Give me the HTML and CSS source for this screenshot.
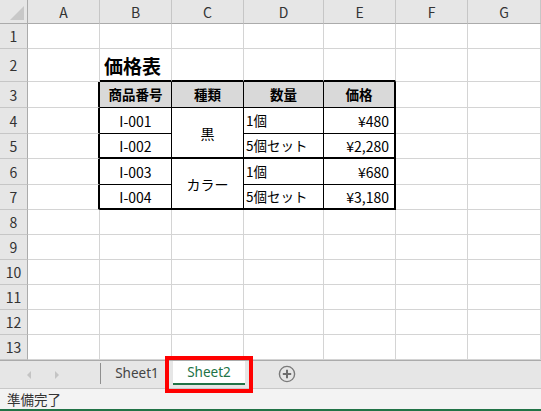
FILE: index.html
```html
<!DOCTYPE html>
<html lang="ja">
<head>
<meta charset="utf-8">
<title>価格表</title>
<link rel="stylesheet" href="styles.css">
</head>
<body>
<div class="app">
  <div class="sheet">
    <div class="corner"><span class="tri"></span></div>
    <div class="ch">A</div><div class="ch">B</div><div class="ch">C</div><div class="ch">D</div><div class="ch">E</div><div class="ch">F</div><div class="ch">G</div>

    <div class="rh">1</div>
    <div class="c"></div><div class="c"></div><div class="c"></div><div class="c"></div><div class="c"></div><div class="c"></div><div class="c"></div>

    <div class="rh">2</div>
    <div class="c"></div><div class="c title tb">価格表</div><div class="c tb"></div><div class="c tb"></div><div class="c tb"></div><div class="c"></div><div class="c"></div>

    <div class="rh">3</div>
    <div class="c tl"></div><div class="t th">商品番号</div><div class="t th">種類</div><div class="t th">数量</div><div class="t th tr">価格</div><div class="c"></div><div class="c"></div>

    <div class="rh">4</div>
    <div class="c tl"></div><div class="t ctr">I-001</div><div class="t ctr merge thickb">黒</div><div class="t lft">1個</div><div class="t rgt tr">¥480</div><div class="c"></div><div class="c"></div>

    <div class="rh">5</div>
    <div class="c tl"></div><div class="t ctr thickb">I-002</div><div class="t lft thickb">5個セット</div><div class="t rgt tr thickb">¥2,280</div><div class="c"></div><div class="c"></div>

    <div class="rh">6</div>
    <div class="c tl"></div><div class="t ctr">I-003</div><div class="t ctr merge thickb">カラー</div><div class="t lft">1個</div><div class="t rgt tr">¥680</div><div class="c"></div><div class="c"></div>

    <div class="rh">7</div>
    <div class="c tl"></div><div class="t ctr thickb">I-004</div><div class="t lft thickb">5個セット</div><div class="t rgt tr thickb">¥3,180</div><div class="c"></div><div class="c"></div>

    <div class="rh">8</div>
    <div class="c"></div><div class="c"></div><div class="c"></div><div class="c"></div><div class="c"></div><div class="c"></div><div class="c"></div>
    <div class="rh">9</div>
    <div class="c"></div><div class="c"></div><div class="c"></div><div class="c"></div><div class="c"></div><div class="c"></div><div class="c"></div>
    <div class="rh">10</div>
    <div class="c"></div><div class="c"></div><div class="c"></div><div class="c"></div><div class="c"></div><div class="c"></div><div class="c"></div>
    <div class="rh">11</div>
    <div class="c"></div><div class="c"></div><div class="c"></div><div class="c"></div><div class="c"></div><div class="c"></div><div class="c"></div>
    <div class="rh">12</div>
    <div class="c"></div><div class="c"></div><div class="c"></div><div class="c"></div><div class="c"></div><div class="c"></div><div class="c"></div>
    <div class="rh">13</div>
    <div class="c"></div><div class="c"></div><div class="c"></div><div class="c"></div><div class="c"></div><div class="c"></div><div class="c"></div>
  </div>

  <div class="tabbar">
    <div class="nav">
      <svg class="arrow" width="8" height="10" viewBox="0 0 8 10"><path d="M6 1 L2 5 L6 9 Z" fill="#c4c4c4"/></svg>
      <svg class="arrow" width="8" height="10" viewBox="0 0 8 10"><path d="M2 1 L6 5 L2 9 Z" fill="#c4c4c4"/></svg>
    </div>
    <div class="sep"></div>
    <div class="tab">Sheet1</div>
    <div class="tab active">Sheet2<span class="highlight"></span></div>
    <svg class="add" width="18" height="18" viewBox="0 0 18 18">
      <circle cx="9" cy="9" r="7.6" fill="none" stroke="#7a7a7a" stroke-width="1.4"/>
      <path d="M9 4.8 V13.2 M4.8 9 H13.2" stroke="#6e6e6e" stroke-width="2"/>
    </svg>
  </div>

  <div class="status">準備完了</div>
</div>
</body>
</html>
```

FILE: styles.css
```css
* { box-sizing: border-box; }
html, body { margin: 0; padding: 0; }
body {
  width: 541px;
  height: 411px;
  overflow: hidden;
  background: #fff;
  font-family: "Noto Sans CJK JP", "Noto Sans", sans-serif;
  color: #000;
}
.app { display: flex; flex-direction: column; width: 541px; height: 411px; }

.sheet {
  display: grid;
  grid-template-columns: 28px 72px 72px 72px 80px 72px 72px 73px;
  grid-template-rows: 24px 25px 33px 26px 26px 25px 26px 25px 25px 25px 25px 25px 25px 25px;
  height: 360px;
}

.corner {
  background: #e6e6e6;
  border-right: 1px solid #ababab;
  border-bottom: 1px solid #ababab;
  position: relative;
}
.tri {
  position: absolute;
  right: 3px;
  bottom: 3px;
  width: 0; height: 0;
  border-left: 14px solid transparent;
  border-bottom: 14px solid #c8c8c8;
}
.ch {
  background: #e6e6e6;
  border-right: 1px solid #c6c6c6;
  border-bottom: 1px solid #ababab;
  display: flex; align-items: center; justify-content: center;
  font-size: 14px;
  color: #333;
  padding-top: 1px;
}
.rh {
  background: #e6e6e6;
  border-right: 1px solid #ababab;
  border-bottom: 1px solid #c6c6c6;
  display: flex; align-items: center; justify-content: center;
  font-size: 14px;
  color: #333;
}
.c {
  border-right: 1px solid #d4d4d4;
  border-bottom: 1px solid #d4d4d4;
}
.title {
  font-size: 19px;
  font-weight: bold;
  display: flex; align-items: flex-end;
  padding: 0 0 5px 4px;
  line-height: 1;
  white-space: nowrap;
}
.tb { border-bottom: 2px solid #000; }
.tl { border-right: 2px solid #000; }

.t {
  border-right: 1px solid #000;
  border-bottom: 1px solid #000;
  display: flex; align-items: center;
  font-size: 14px;
  line-height: 1;
  white-space: nowrap;
}
.th {
  background: #d9d9d9;
  justify-content: center;
  font-weight: bold;
  font-size: 13.5px;
}
.tr { border-right: 2px solid #000; }
.thickb { border-bottom: 2px solid #000; }
.ctr { justify-content: center; }
.lft { justify-content: flex-start; padding-left: 2px; font-size: 13.5px; }
.rgt { justify-content: flex-end; padding-right: 5px; }
.merge { grid-row: span 2; }

.tabbar {
  height: 28px;
  background: #e6e6e6;
  border-top: 1px solid #ababab;
  display: flex;
  align-items: flex-start;
}
.nav {
  width: 100px;
  height: 27px;
  display: flex;
  align-items: center;
  padding-left: 25px;
  gap: 20px;
}
.sep {
  width: 1px;
  height: 21px;
  margin-top: 2px;
  background: #8f8f8f;
}
.tab {
  width: 72px;
  height: 24px;
  display: flex; align-items: center; justify-content: center;
  font-size: 13.5px;
  color: #444;
  font-family: "Noto Sans", "Noto Sans CJK JP", sans-serif;
}
.tab.active {
  background: #fff;
  color: #217346;
  border-bottom: 2px solid #217346;
  position: relative;
}
.highlight {
  position: absolute;
  left: -8px;
  top: -5px;
  width: 88px;
  height: 37px;
  border: 4px solid #ff0000;
}
.add { margin-left: 33px; margin-top: 4px; }

.status {
  flex: 1;
  background: #f3f3f3;
  border-top: 1px solid #c8c8c8;
  border-bottom: 2px solid #217346;
  font-size: 13.5px;
  color: #333;
  padding-left: 7px;
  display: flex;
  align-items: center;
}
```
